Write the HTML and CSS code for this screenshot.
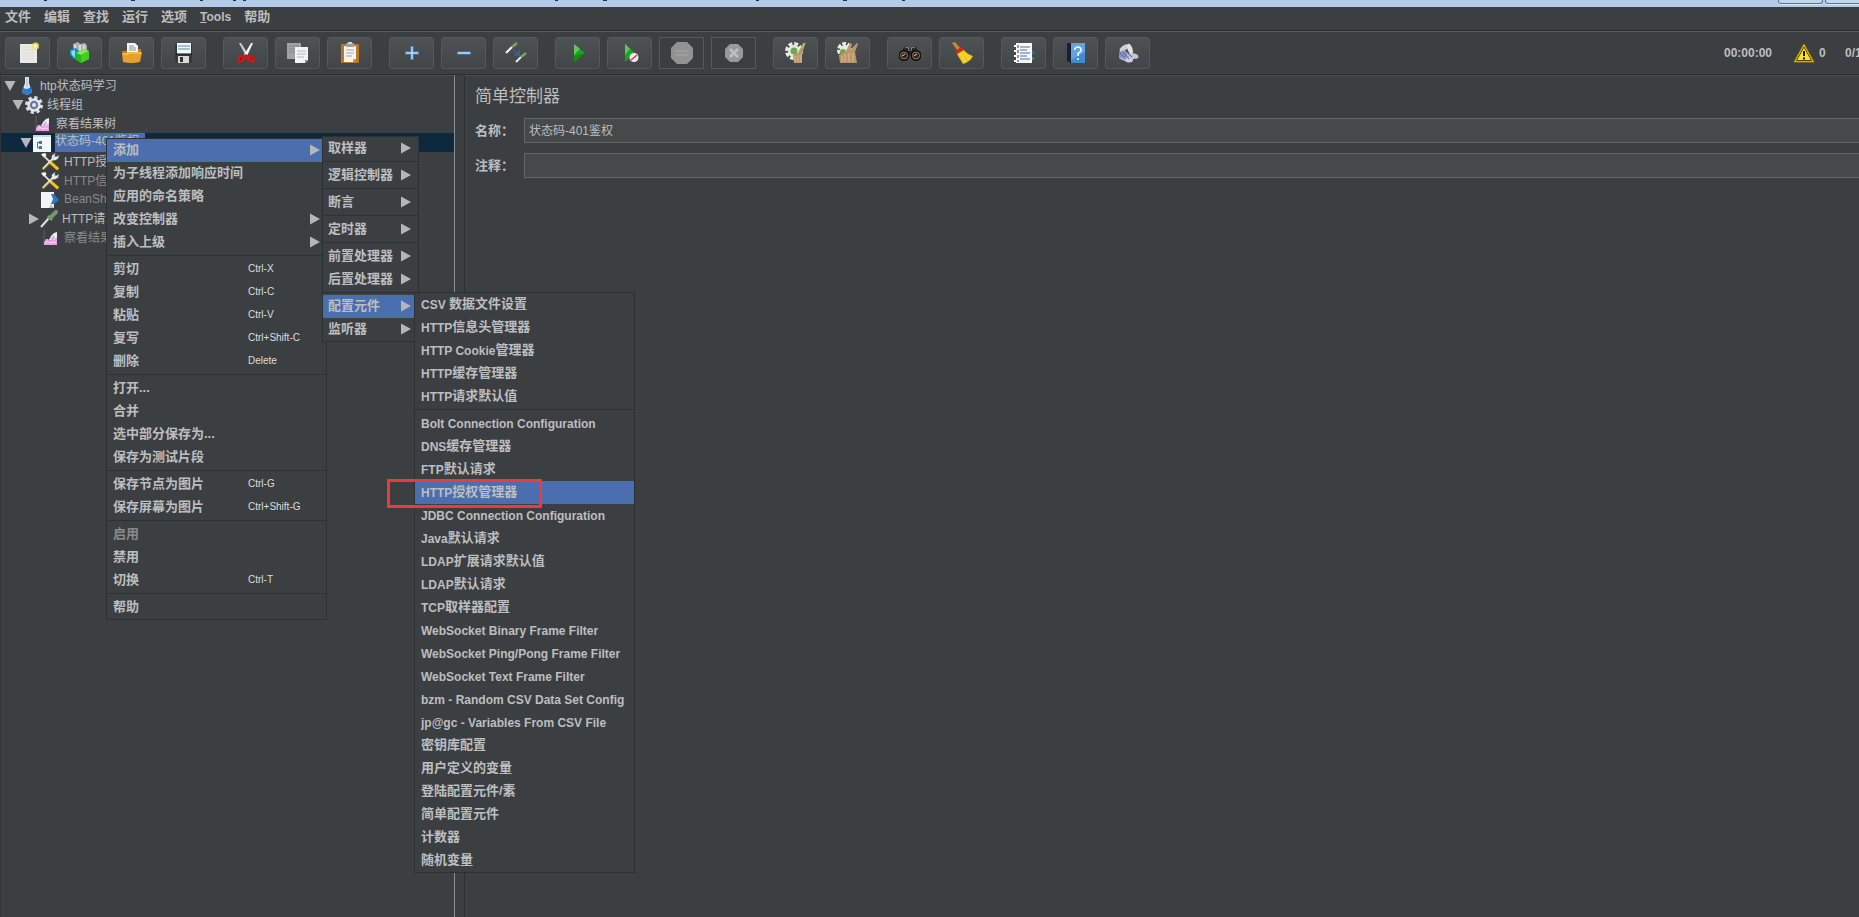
FILE: index.html
```
<!DOCTYPE html>
<html lang="zh-CN">
<head>
<meta charset="utf-8">
<title>JMeter</title>
<link rel="stylesheet" href="styles.css">
</head>
<body>
<svg class="sprite" aria-hidden="true">
  <symbol id="arrow-right" viewBox="0 0 10 12"><path d="M0 0.5L10 6L0 11.5Z" fill="#b4b6b8"/></symbol>
  <symbol id="arrow-down" viewBox="0 0 12 10"><path d="M0.5 0H11.5L6 10Z" fill="#b4b6b8"/></symbol>
  <symbol id="graph" viewBox="0 0 16 16"><path d="M1 0V15" stroke="#5c5f61"/><path d="M6 10L8 6L11 3L14 2V10L10 12Z" fill="#f2eef8"/><path d="M8 8L11 5L12 8L9 11Z" fill="#b3c4e2"/><path d="M1 15V12L3 9H5L7 11L9 9L11 10L14 7V15Z" fill="#eaa0e4"/><path d="M3 13L5 11L7 13L11 12L13 13" stroke="#fbdcf8" fill="none"/></symbol>
  <symbol id="tools" viewBox="0 0 20 20"><path d="M2 18L14 6" stroke="#c9a84e" stroke-width="2.500"/><path d="M2 17L13 6" stroke="#f8f0cf" stroke-width="1.200"/><path d="M12 3L16 0L15 4L18 4L20 2L19 6L16 8H12Z" fill="#e4e8ea"/><path d="M2 2L12 12" stroke="#e4e4e0" stroke-width="2"/><path d="M11 11L19 18" stroke="#f2c30f" stroke-width="3.500"/><path d="M0 1L5 0L6 3L3 5Z" fill="#f4f4f2"/></symbol>
</svg>

<header class="titlebar">
  <svg class="title-marks" width="920" height="2" aria-hidden="true"><path d="M44 0h3v1h-3zM131 0h4v1h-4zM200 0h3v1h-3zM233 0h3v1h-3zM243 0h3v1h-3zM555 0h3v1h-3zM603 0h4v1h-4zM756 0h3v1h-3zM843 0h4v1h-4zM902 0h3v1h-3z" fill="#173052"/></svg>
  <div class="window-buttons"><button type="button" aria-label="最小化"></button><button type="button" aria-label="最大化"></button></div>
</header>

<nav class="menubar">
  <button type="button">文件</button><button type="button">编辑</button><button type="button">查找</button><button type="button">运行</button><button type="button">选项</button><button type="button" class="latin"><u>T</u>ools</button><button type="button">帮助</button>
</nav>

<div class="toolbar">
  <div class="tool-group">
    <button type="button" aria-label="新建"><svg viewBox="0 0 22 22"><rect x="3" y="2" width="17" height="19" fill="#e9e9e6"/><path d="M5 5H17M5 8H17M5 11H17M5 14H17M5 17H17" stroke="#dadad6"/><circle cx="18.500" cy="4" r="3.500" fill="#f2e35a" opacity="0.900"/><circle cx="18.500" cy="4" r="1.500" fill="#fffbd0"/></svg></button>
    <button type="button" aria-label="模板"><svg viewBox="0 0 22 22"><path d="M4 2L9 0L11 2L16 1L18 4V11L5 12Z" fill="#aeb4b5"/><path d="M6 3V9M11 3V9M15 3V8" stroke="#e2e6e6" stroke-width="1.500"/><path d="M1 8L7 6L11 10V19L5 17L1 13Z" fill="#1292c2"/><path d="M2 9L6 8V16L3 13Z" fill="#7fe0f2"/><path d="M7 11L15 7L20 9V17L12 21L7 18Z" fill="#28b51c"/><path d="M7 11L15 7L20 9L12 13Z" fill="#86e657"/><path d="M12 13L20 9V17L12 21Z" fill="#42cf22"/></svg></button>
    <button type="button" aria-label="打开"><svg viewBox="0 0 22 22"><path d="M1 9H5L7 7H20V13H1Z" fill="#c57f16"/><path d="M6 1H14L17 4V12H6Z" fill="#f5f5f5"/><path d="M8 4H13M8 6H15M8 8H15" stroke="#8c9296"/><path d="M1 11H6L8 10H21L19 20Q10 22 2 20Z" fill="#e8a02c"/><path d="M2 12H7L9 11H20" stroke="#ffd46c" fill="none"/></svg></button>
    <button type="button" aria-label="保存"><svg viewBox="0 0 22 22"><path d="M3 2H19V21H4L2 19V3Z" fill="#36383b"/><rect x="4" y="1" width="14" height="11" fill="#f3f6f7"/><path d="M5 4H17M5 7H17" stroke="#8bb3c4" stroke-width="1.500"/><rect x="5" y="14" width="11" height="7" fill="#d8d8d8"/><rect x="7" y="15" width="3" height="5" fill="#333"/><path d="M3 12H19" stroke="#111"/></svg></button>
  </div>
  <div class="tool-group">
    <button type="button" aria-label="剪切"><svg viewBox="0 0 22 22"><path d="M4 1L6 1L13 12L11 14Z" fill="#cdd4d7"/><path d="M16 1L18 1L12 14L9 13Z" fill="#f5f7f7"/><path d="M3 14H8L11 12L14 14H18L20 17L19 20L16 21L13 18L11 17L9 18L6 21L3 20L2 17Z" fill="#cf1616"/><path d="M5 17H6M16 17H17" stroke="#621111" stroke-width="2"/></svg></button>
    <button type="button" aria-label="复制"><svg viewBox="0 0 22 22"><rect x="0" y="1" width="14" height="16" fill="#a0a3a4"/><path d="M2 4H12M2 7H12M2 10H12" stroke="#84888a"/><path d="M8 5H21V18L18 21H8Z" fill="#f3f3f3"/><path d="M10 9H19M10 12H19M10 15H17" stroke="#b3b7b9"/><path d="M18 21V18H21Z" fill="#8b8e90"/></svg></button>
    <button type="button" aria-label="粘贴"><svg viewBox="0 0 22 22"><rect x="2" y="2" width="18" height="19" rx="1" fill="#bd7625"/><path d="M5 4H17V17L14 20H5Z" fill="#f6f4ee"/><path d="M7 8H15M7 11H15M7 14H13" stroke="#9da7ac"/><rect x="7" y="1" width="8" height="4" rx="1" fill="#9ea09a"/><rect x="9" y="0" width="4" height="2" fill="#d9d7c9"/><path d="M14 20V17H17Z" fill="#a5a29b"/></svg></button>
  </div>
  <div class="tool-group">
    <button type="button" aria-label="展开"><svg viewBox="0 0 22 22"><path d="M11 4V18M4 11H18" stroke="#4a8ed0" stroke-width="3"/><path d="M11 5V17M5 11H17" stroke="#b9dcf8" stroke-width="1.500"/></svg></button>
    <button type="button" aria-label="折叠"><svg viewBox="0 0 22 22"><path d="M4 11H18" stroke="#4a8ed0" stroke-width="3"/><path d="M5 11H17" stroke="#b9dcf8" stroke-width="1.500"/></svg></button>
    <button type="button" aria-label="切换"><svg viewBox="0 0 22 22"><path d="M1 11L7 5" stroke="#f0f0f0" stroke-width="2"/><path d="M7 5L12 1" stroke="#79a85d" stroke-width="2.500"/><path d="M11 20L16 15" stroke="#f0e8ee" stroke-width="2"/><path d="M16 15L21 11" stroke="#79a85d" stroke-width="2.500"/><path d="M8 8L14 13M14 8V13H9" stroke="#2e6a9c" stroke-width="1.500" fill="none"/></svg></button>
  </div>
  <div class="tool-group">
    <button type="button" aria-label="启动"><svg viewBox="0 0 22 22"><path d="M7 2L18 11L7 20Z" fill="#19a51b"/><path d="M7 2L13 7L7 13Z" fill="#62c45c"/><path d="M7 14L18 11L7 20Z" fill="#0f8f12"/></svg></button>
    <button type="button" aria-label="不停顿开始"><svg viewBox="0 0 22 22"><path d="M6 2L16 11L6 20Z" fill="#19a51b"/><path d="M6 2L11 7L6 13Z" fill="#62c45c"/><circle cx="15" cy="15.500" r="4.500" fill="#f4eef2"/><path d="M12 18L18 13" stroke="#d62a58" stroke-width="1.500"/></svg></button>
    <button type="button" class="off" aria-label="停止" disabled><svg viewBox="0 0 22 22"><path d="M6 0H16L22 6V16L16 22H6L0 16V6Z" fill="#929292"/><path d="M4 9H18M4 13H18" stroke="#9d9d9d" stroke-width="2"/></svg></button>
    <button type="button" class="off" aria-label="关闭" disabled><svg viewBox="0 0 22 22"><path d="M7 2H15L20 7V15L15 20H7L2 15V7Z" fill="#999"/><path d="M7 7L15 15M15 7L7 15" stroke="#c0c0c0" stroke-width="2.500"/></svg></button>
  </div>
  <div class="tool-group">
    <button type="button" aria-label="清除"><svg viewBox="0 0 22 22"><circle cx="9" cy="9" r="7" fill="none" stroke="#e7e9e7" stroke-width="4" stroke-dasharray="3.700 1.800"/><circle cx="9" cy="9" r="6" fill="#e7e9e7"/><circle cx="9" cy="9" r="3.500" fill="#6da84e"/><path d="M8 13L13 11L18 1L20 2L17 12V21H9Z" fill="#b8966a"/><path d="M10 14V20M13 13V20M16 12V20" stroke="#d8bd92"/><path d="M17 6L20 1" stroke="#a6c95e" stroke-width="1.500"/></svg></button>
    <button type="button" aria-label="清除全部"><svg viewBox="0 0 22 22"><circle cx="8" cy="8" r="6" fill="none" stroke="#e7e9e7" stroke-width="4" stroke-dasharray="3.500 1.500"/><circle cx="8" cy="8" r="5" fill="#e7e9e7"/><circle cx="6" cy="10" r="3" fill="#6da84e"/><path d="M2 13L9 9L13 1L15 2L13 8L20 1L21 2L18 10L20 21H3Z" fill="#b8966a"/><path d="M5 14V20M8 12V20M12 11V20M16 11V20" stroke="#d8bd92"/></svg></button>
  </div>
  <div class="tool-group">
    <button type="button" aria-label="查找"><svg viewBox="0 0 22 22"><path d="M1 13L5 5L9 4L11 8L13 4L17 5L21 13Z" fill="#242424"/><path d="M6 6L9 5L10 9M16 6L13 5L12 9" stroke="#8a8a8a" fill="none"/><circle cx="5" cy="13.500" r="4.500" fill="#2b2421" stroke="#111" stroke-width="2"/><circle cx="17" cy="13.500" r="4.500" fill="#2b2421" stroke="#111" stroke-width="2"/><circle cx="5" cy="13.500" r="3.500" fill="none" stroke="#a87456"/><circle cx="17" cy="13.500" r="3.500" fill="none" stroke="#a87456"/><path d="M3 14L6 12M15 14L18 12" stroke="#ddd"/></svg></button>
    <button type="button" aria-label="重置查找"><svg viewBox="0 0 22 22"><path d="M1 1L4 0L9 6L6 8Z" fill="#c98b28"/><path d="M4 9L11 5L13 8L6 12Z" fill="#c92d1b"/><path d="M6 12L13 8Q16 12 22 14Q19 20 12 22Q9 17 6 12Z" fill="#f0cb1f"/><path d="M10 12L14 20M13 11L18 17" stroke="#f8e04a"/></svg></button>
  </div>
  <div class="tool-group">
    <button type="button" aria-label="函数助手"><svg viewBox="0 0 22 22"><rect x="3" y="1" width="16" height="20" fill="#f6f7fb"/><path d="M7 5H17M7 8H14M7 11H17M7 14H14M7 17H17" stroke="#4a6cb0"/><path d="M1 4H5M1 9H5M1 14H5M1 19H5" stroke="#fff" stroke-width="2"/><path d="M5 3V20" stroke="#26304a" stroke-dasharray="3 2"/><path d="M19 9H21V12H19Z" fill="#2e6ea9"/><path d="M19 15H21V18H19Z" fill="#34904b"/></svg></button>
    <button type="button" aria-label="帮助"><svg viewBox="0 0 22 22"><path d="M2 1L6 1V21L2 19Z" fill="#17212e"/><rect x="6" y="1" width="14" height="20" fill="#438bd1"/><path d="M6 1H20V10L6 18Z" fill="#60a4e2"/><path d="M9.500 8Q10 5 13 5Q16 5 16 8Q16 10 13 11.500V14M13 16V18" stroke="#fff" stroke-width="1.500" fill="none"/></svg></button>
    <button type="button" aria-label="线程"><svg viewBox="0 0 22 22"><ellipse cx="10" cy="15" rx="8" ry="4" fill="#a9b0d0"/><ellipse cx="6" cy="12" rx="4" ry="4" fill="#8b94c9"/><ellipse cx="7" cy="6" rx="2.500" ry="5" fill="#cdd0dc" transform="rotate(55 7 6)"/><ellipse cx="13" cy="7" rx="2.500" ry="5.500" fill="#dfe1e8" transform="rotate(-20 13 7)"/><ellipse cx="17" cy="14" rx="4.500" ry="2.500" fill="#c3c6d0" transform="rotate(15 17 14)"/><ellipse cx="12" cy="18" rx="4" ry="2.500" fill="#c9cce0"/><path d="M3 11L9 17M5 9L12 17M9 9L15 15" stroke="#5660a6"/></svg></button>
  </div>
  <div class="status">
    <span class="clock">00:00:00</span>
    <button type="button" class="warn"><svg viewBox="0 0 22 20"><path d="M11 1L21 19H1Z" fill="#f4cf10" stroke="#a98c00"/><path d="M11 4L18.500 17.500H3.500Z" fill="#ffe01c" stroke="#4d4200"/><path d="M11 8V13M11 14.500V16.500" stroke="#111" stroke-width="2"/></svg>0</button>
    <span class="threads">0/1</span>
  </div>
</div>

<main class="workspace">
  <section class="tree" aria-label="测试计划">
    <div class="node"><svg class="tw" viewBox="0 0 12 10"><use href="#arrow-down"/></svg><svg class="ic" viewBox="0 0 18 18"><path d="M7 0H11V6L14 15Q9 20 4 15L7 6Z" fill="#dce8f0"/><path d="M5 11L9 12L13 10L14 15Q9 20 4 15Z" fill="#2c7bd0"/><path d="M9 1V10" stroke="#9fb4bf" stroke-width="1"/></svg><span>htp状态码学习</span></div>
    <div class="node d1"><svg class="tw" viewBox="0 0 12 10"><use href="#arrow-down"/></svg><svg class="ic" viewBox="0 0 18 18"><circle cx="9" cy="9" r="7.500" fill="none" stroke="#d6dce2" stroke-width="3" stroke-dasharray="3.300 2.590"/><circle cx="9" cy="9" r="5.500" fill="#66799f" stroke="#e3e7ec" stroke-width="2.500"/><circle cx="9" cy="9" r="2" fill="#dfe7f2"/></svg><span>线程组</span></div>
    <div class="node leaf d2"><svg class="ic small" viewBox="0 0 16 16"><use href="#graph"/></svg><span>察看结果树</span></div>
    <div class="node d2 selected"><svg class="tw" viewBox="0 0 12 10"><use href="#arrow-down"/></svg><svg class="ic" viewBox="0 0 18 18"><rect width="18" height="17" y="1" fill="#f4f7fa"/><rect width="18" height="2" y="1" fill="#c5d8ee"/><path d="M4.500 8V14H7M5 8.500H7" stroke="#4074a8" fill="none"/><path d="M6 7H9V10H6ZM6 12H9V15H6Z" fill="#3c78b8"/></svg><span class="label">状态码-401鉴权</span></div>
    <div class="node leaf d3"><svg class="ic" viewBox="0 0 20 20"><use href="#tools"/></svg><span>HTTP授权管理器</span></div>
    <div class="node leaf d3 dim"><svg class="ic" viewBox="0 0 20 20"><use href="#tools"/></svg><span>HTTP信息头管理器</span></div>
    <div class="node leaf d3 dim"><svg class="ic" viewBox="0 0 18 18"><path d="M0 1H13V17H0Z" fill="#f2f5f8"/><path d="M10 3H13L18 9L13 13H10L12 8Z" fill="#2a78be"/><path d="M10 13L13 17H8Z" fill="#b7c0c8"/></svg><span>BeanShell</span></div>
    <div class="node d3"><svg class="tw side" viewBox="0 0 10 12"><use href="#arrow-right"/></svg><svg class="ic" viewBox="0 0 18 18"><path d="M1 17L9 8" stroke="#dfe3dc" stroke-width="2"/><path d="M8 6L12 10" stroke="#a9b0a5" stroke-width="2"/><path d="M10 8L16 2" stroke="#6f9a68" stroke-width="4" stroke-linecap="round"/></svg><span>HTTP请求</span></div>
    <div class="node leaf d3 dim"><svg class="ic small" viewBox="0 0 16 16"><use href="#graph"/></svg><span>察看结果树</span></div>
  </section>
  <section class="editor">
    <h1>简单控制器</h1>
    <div class="field"><label for="name">名称：</label><input id="name" type="text" value="状态码-401鉴权"></div>
    <div class="field"><label for="note">注释：</label><input id="note" type="text"></div>
  </section>
</main>

<div class="popup context" role="menu">
  <button type="button" role="menuitem" class="active"><b>添加</b><svg viewBox="0 0 10 12"><use href="#arrow-right"/></svg></button>
  <button type="button" role="menuitem"><b>为子线程添加响应时间</b></button>
  <button type="button" role="menuitem"><b>应用的命名策略</b></button>
  <button type="button" role="menuitem"><b>改变控制器</b><svg viewBox="0 0 10 12"><use href="#arrow-right"/></svg></button>
  <button type="button" role="menuitem"><b>插入上级</b><svg viewBox="0 0 10 12"><use href="#arrow-right"/></svg></button>
  <hr>
  <button type="button" role="menuitem"><b>剪切</b><kbd>Ctrl-X</kbd></button>
  <button type="button" role="menuitem"><b>复制</b><kbd>Ctrl-C</kbd></button>
  <button type="button" role="menuitem"><b>粘贴</b><kbd>Ctrl-V</kbd></button>
  <button type="button" role="menuitem"><b>复写</b><kbd>Ctrl+Shift-C</kbd></button>
  <button type="button" role="menuitem"><b>删除</b><kbd>Delete</kbd></button>
  <hr>
  <button type="button" role="menuitem"><b>打开...</b></button>
  <button type="button" role="menuitem"><b>合并</b></button>
  <button type="button" role="menuitem"><b>选中部分保存为...</b></button>
  <button type="button" role="menuitem"><b>保存为测试片段</b></button>
  <hr>
  <button type="button" role="menuitem"><b>保存节点为图片</b><kbd>Ctrl-G</kbd></button>
  <button type="button" role="menuitem"><b>保存屏幕为图片</b><kbd>Ctrl+Shift-G</kbd></button>
  <hr>
  <button type="button" role="menuitem" disabled><b>启用</b></button>
  <button type="button" role="menuitem"><b>禁用</b></button>
  <button type="button" role="menuitem"><b>切换</b><kbd>Ctrl-T</kbd></button>
  <hr>
  <button type="button" role="menuitem"><b>帮助</b></button>
</div>

<div class="popup add" role="menu">
  <button type="button" role="menuitem"><b>取样器</b><svg viewBox="0 0 10 12"><use href="#arrow-right"/></svg></button>
  <hr>
  <button type="button" role="menuitem"><b>逻辑控制器</b><svg viewBox="0 0 10 12"><use href="#arrow-right"/></svg></button>
  <hr>
  <button type="button" role="menuitem"><b>断言</b><svg viewBox="0 0 10 12"><use href="#arrow-right"/></svg></button>
  <hr>
  <button type="button" role="menuitem"><b>定时器</b><svg viewBox="0 0 10 12"><use href="#arrow-right"/></svg></button>
  <hr>
  <button type="button" role="menuitem"><b>前置处理器</b><svg viewBox="0 0 10 12"><use href="#arrow-right"/></svg></button>
  <button type="button" role="menuitem"><b>后置处理器</b><svg viewBox="0 0 10 12"><use href="#arrow-right"/></svg></button>
  <hr>
  <button type="button" role="menuitem" class="active"><b>配置元件</b><svg viewBox="0 0 10 12"><use href="#arrow-right"/></svg></button>
  <button type="button" role="menuitem"><b>监听器</b><svg viewBox="0 0 10 12"><use href="#arrow-right"/></svg></button>
</div>

<div class="popup config" role="menu">
  <button type="button" role="menuitem"><i>CSV&nbsp;</i><b>数据文件设置</b></button>
  <button type="button" role="menuitem"><i>HTTP</i><b>信息头管理器</b></button>
  <button type="button" role="menuitem"><i>HTTP Cookie</i><b>管理器</b></button>
  <button type="button" role="menuitem"><i>HTTP</i><b>缓存管理器</b></button>
  <button type="button" role="menuitem"><i>HTTP</i><b>请求默认值</b></button>
  <hr>
  <button type="button" role="menuitem"><i>Bolt Connection Configuration</i></button>
  <button type="button" role="menuitem"><i>DNS</i><b>缓存管理器</b></button>
  <button type="button" role="menuitem"><i>FTP</i><b>默认请求</b></button>
  <button type="button" role="menuitem" class="active"><i>HTTP</i><b>授权管理器</b></button>
  <button type="button" role="menuitem"><i>JDBC Connection Configuration</i></button>
  <button type="button" role="menuitem"><i>Java</i><b>默认请求</b></button>
  <button type="button" role="menuitem"><i>LDAP</i><b>扩展请求默认值</b></button>
  <button type="button" role="menuitem"><i>LDAP</i><b>默认请求</b></button>
  <button type="button" role="menuitem"><i>TCP</i><b>取样器配置</b></button>
  <button type="button" role="menuitem"><i>WebSocket Binary Frame Filter</i></button>
  <button type="button" role="menuitem"><i>WebSocket Ping/Pong Frame Filter</i></button>
  <button type="button" role="menuitem"><i>WebSocket Text Frame Filter</i></button>
  <button type="button" role="menuitem"><i>bzm - Random CSV Data Set Config</i></button>
  <button type="button" role="menuitem"><i>jp@gc - Variables From CSV File</i></button>
  <button type="button" role="menuitem"><b>密钥库配置</b></button>
  <button type="button" role="menuitem"><b>用户定义的变量</b></button>
  <button type="button" role="menuitem"><b>登陆配置元件/素</b></button>
  <button type="button" role="menuitem"><b>简单配置元件</b></button>
  <button type="button" role="menuitem"><b>计数器</b></button>
  <button type="button" role="menuitem"><b>随机变量</b></button>
</div>
<div class="callout"></div>
</body>
</html>
```
FILE: styles.css
```
* { box-sizing: border-box; }
html, body { height: 100%; }
body {
  margin: 0;
  position: relative;
  display: flex;
  flex-direction: column;
  overflow: hidden;
  background: #3c3f41;
  color: #bcbec0;
  font: 12px "Liberation Sans", "Noto Sans CJK SC", sans-serif;
}
button { margin: 0; padding: 0; border: 0; background: none; color: inherit; font: inherit; }
.sprite { position: absolute; width: 0; height: 0; }

.titlebar { flex: none; display: flex; justify-content: space-between; height: 7px; background: #b3cbe6; }
.window-buttons { display: flex; gap: 2px; width: 81px; overflow: hidden; }
.window-buttons button { flex: none; width: 45px; height: 4px; border: 1px solid #57739c; border-top: 0; border-radius: 0 0 3px 3px; background: #c3d6ec; box-shadow: 0 1px #dbe7f5; }

.menubar { flex: none; display: flex; gap: 13px; height: 24px; padding: 0 5px 3px; border-bottom: 1px solid #2a2c2d; font-size: 13px; font-weight: bold; line-height: 20px; }
.menubar .latin { font-size: 12px; }

.toolbar { flex: none; display: flex; align-items: center; gap: 17px; height: 44px; padding: 0 0 0 5px; border-top: 1px solid #595c5e; border-bottom: 1px solid #2a2c2d; }
.tool-group { display: flex; gap: 7px; }
.tool-group button { display: grid; place-items: center; width: 45px; height: 32px; border: 1px solid #55585a; border-radius: 3px; background: linear-gradient(#4e5254, #414547); }
.tool-group .off { border-radius: 0; background: #3c3f41; }
.tool-group svg { display: block; width: 22px; height: 22px; }
.status { flex: none; display: flex; align-items: center; width: 135px; margin-left: auto; overflow: hidden; font-weight: bold; white-space: nowrap; }
.clock { flex: none; width: 69px; }
.warn { flex: none; display: flex; align-items: center; gap: 4px; width: 52px; }
.warn svg { width: 22px; height: 20px; }

.workspace { flex: 1; display: flex; gap: 9px; min-height: 0; }
.tree { flex: none; width: 455px; border-right: 1px solid #8c8e8f; border-left: 1px solid #323435; border-top: 1px solid #4a4d4f; }
.node { display: flex; align-items: center; height: 19px; padding-left: 3px; white-space: nowrap; }
.node span { padding-bottom: 2px; }
.d1 { padding-left: 11px; }
.d2 { padding-left: 19px; }
.d3 { padding-left: 27px; }
.leaf { padding-left: 31px; }
.leaf.d3 { padding-left: 39px; }
.tw { flex: none; width: 12px; height: 10px; }
.tw.side { width: 10px; height: 12px; margin-left: 1px; }
.ic { flex: none; width: 18px; height: 18px; margin: 0 4px 0 1px; }
.leaf .ic { margin-right: 5px; }
.node:first-child .ic { margin: 0 4px 0 2px; }
.leaf .small { width: 16px; height: 16px; margin: 0 5px 0 3px; }
.selected { background: #0d293e; }
.label { width: 90px; height: 19px; line-height: 17px; background: #4b6eaf; }
.dim { color: #888a8c; }

.editor { flex: 1; min-width: 0; padding: 8px 0 0 10px; border-left: 1px solid #2d2f30; border-top: 1px solid #4a4d4f; }
.editor h1 { margin: 0 0 9px; font-size: 17px; font-weight: normal; line-height: 25px; }
.field { display: flex; align-items: center; height: 25px; margin-bottom: 10px; }
.field label { flex: none; width: 49px; padding-bottom: 3px; font-size: 13px; font-weight: bold; }
.field input { flex: 1; min-width: 0; height: 25px; padding: 0 4px 2px; border: 1px solid #646769; border-right: 0; outline: 0; background: #45494a; color: #bcbec0; font: inherit; }

.popup { position: absolute; display: flex; flex-direction: column; border: 1px solid #2e3031; background: #3c3f41; }
.popup button { display: flex; align-items: center; height: 23px; padding: 0 5px; text-align: left; white-space: nowrap; font-size: 12px; line-height: 20px; }
.popup b { padding-bottom: 2px; font-size: 13px; }
.popup i { font-style: normal; font-weight: bold; }
.popup hr { width: 100%; height: 3px; margin: 1px 0 0; border: 0; border-top: 1px solid #2e3031; }
.popup svg { width: 10px; height: 12px; margin-left: auto; margin-bottom: 1px; }
.popup button:disabled { color: #888a8c; }
.popup .active { background: #4b6eaf; }
.popup kbd { padding-bottom: 2px; color: #dcdedf; font: 10px "Liberation Sans", sans-serif; line-height: 20px; }
.context { left: 106px; top: 138px; width: 221px; }
.popup.context button { padding: 0 1px 0 6px; }
.context b { flex: none; width: 135px; }
.context svg { margin-right: 5px; }
.add { left: 322px; top: 136px; width: 97px; }
.add svg { margin-right: 2px; }
.config { left: 414px; top: 292px; width: 221px; }
.config button { padding: 0 6px; }
.callout { position: absolute; left: 387px; top: 479px; width: 155px; height: 29px; border: 3px solid #ee3a3a; pointer-events: none; }
```
